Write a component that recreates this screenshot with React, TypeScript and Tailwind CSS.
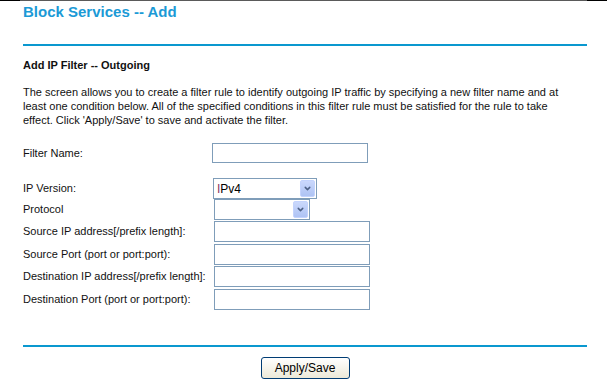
import { ChevronDown } from 'lucide-react';

function SelectBox({ value, width }: { value: string; width: string }) {
  return (
    <div className={`${width} h-[21px] border border-[#7f9db9] bg-white flex items-center justify-between pl-[3px] pr-[1px]`}>
      <span className="text-[12px] leading-none text-black">
        {value && <span className="text-[#8b3a62]">I</span>}
        {value.slice(1)}
      </span>
      <div className="w-[15px] h-[17px] rounded-[2px] border border-[#c3d3fd] bg-gradient-to-b from-[#cad8fc] to-[#aec3f4] flex items-center justify-center">
        <ChevronDown className="w-[9px] h-[9px] text-[#4d6185]" strokeWidth={4} />
      </div>
    </div>
  );
}

function Field({ label, children, className = '' }: { label: string; children: React.ReactNode; className?: string }) {
  return (
    <div className={`flex items-center ${className}`}>
      <span className="w-[189px] shrink-0 text-[11px] text-[#111] whitespace-nowrap">{label}</span>
      {children}
    </div>
  );
}

const inputCls = 'w-[156px] h-[21px] border border-[#7f9db9] bg-white';

export default function App() {
  return (
    <div className="w-[607px] h-[381px] bg-white font-['Liberation_Sans',Arial,sans-serif] overflow-hidden">
      {/* top rule */}
      <div className="flex h-px">
        <div className="w-[20px] bg-black" />
        <div className="flex-1 bg-[#5a5a5a]" />
        <div className="w-[20px] bg-black" />
      </div>

      <div className="pl-[23px] pr-[20px]">
        <h1 className="mt-[2px] text-[15px] leading-[18px] font-bold text-[#1b9ad6]">Block Services -- Add</h1>
        <div className="mt-[23px] h-[2px] bg-[#0a98cf]" />

        <h2 className="mt-[12px] text-[11px] leading-[14px] font-bold text-[#111]">Add IP Filter -- Outgoing</h2>
        <p className="mt-[13px] text-[11px] leading-[14px] text-[#111] pr-[8px]">
          The screen allows you to create a filter rule to identify outgoing IP traffic by specifying a new filter name and at
          least one condition below. All of the specified conditions in this filter rule must be satisfied for the rule to take
          effect. Click 'Apply/Save' to save and activate the filter.
        </p>

        <Field label="Filter Name:" className="mt-[16px]">
          <div className="w-[156px] h-[20px] border border-[#7f9db9] bg-white ml-0" />
        </Field>

        <Field label="IP Version:" className="mt-[15px]">
          <div className="ml-px"><SelectBox value="IPv4" width="w-[104px]" /></div>
        </Field>
        <Field label="Protocol">
          <div className="ml-[2px]"><SelectBox value="" width="w-[96px]" /></div>
        </Field>
        <Field label="Source IP address[/prefix length]:" className="mt-px">
          <div className={`ml-[2px] ${inputCls}`} />
        </Field>
        <Field label="Source Port (port or port:port):" className="mt-[2px]">
          <div className={`ml-[2px] ${inputCls}`} />
        </Field>
        <Field label="Destination IP address[/prefix length]:" className="mt-[1px]">
          <div className={`ml-[2px] ${inputCls}`} />
        </Field>
        <Field label="Destination Port (port or port:port):" className="mt-[2px]">
          <div className={`ml-[2px] ${inputCls}`} />
        </Field>

        <div className="mt-[35px] h-[2px] bg-[#0a98cf]" />
        <div className="mt-[10px] flex justify-center">
          <button className="w-[89px] h-[22px] rounded-[3px] border border-[#003c74] bg-gradient-to-b from-white to-[#ece9d8] text-[12px] text-black">
            Apply/Save
          </button>
        </div>
      </div>
    </div>
  );
}
